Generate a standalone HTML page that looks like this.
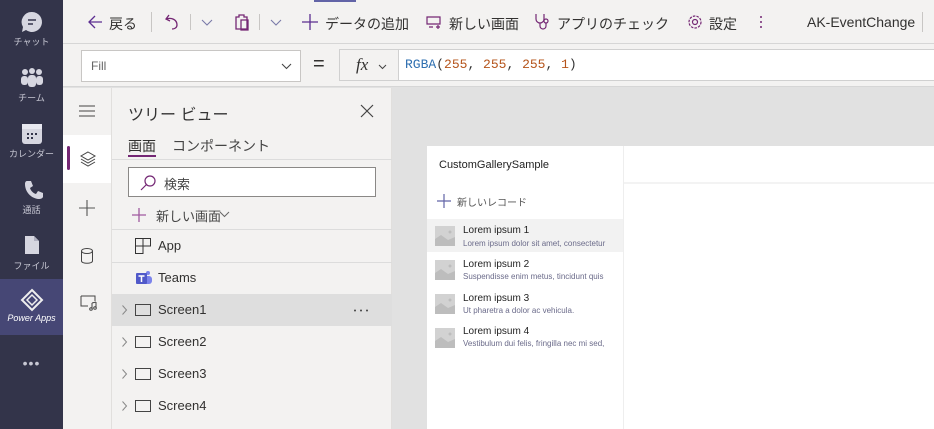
<!DOCTYPE html>
<html><head><meta charset="utf-8"><style>
*{box-sizing:border-box;margin:0;padding:0}
body{width:934px;height:429px;overflow:hidden;position:relative;font-family:"Liberation Sans","Noto Sans CJK JP",sans-serif;background:#e1e1e1;color:#323130}
.abs{position:absolute}
svg{position:absolute;overflow:visible}
.rail{left:0;top:0;width:63px;height:429px;background:#33344a}
.ri{position:absolute;left:0;width:63px;text-align:center;color:#c8c8d4;font-size:9px}
.tb{left:63px;top:0;width:871px;height:44px;background:#f3f2f1;border-bottom:1px solid #d6d6d6;font-size:14px}
.tb span{position:absolute;top:14px;white-space:nowrap}
.fb{left:63px;top:44px;width:871px;height:43px;background:#f3f2f1;border-bottom:1px solid #d6d6d6}
.side{left:63px;top:88px;width:49px;height:341px;background:#f3f2f1;border-right:1px solid #e1dfdd}
.tree{left:112px;top:88px;width:280px;height:341px;background:#f3f2f1;border-right:1px solid #e1dfdd}
.row{position:absolute;left:0;width:280px;height:32px;font-size:13px}
.row .t{position:absolute;left:46px;top:8px}
.scr{position:absolute;left:23px;top:10px;width:16px;height:12px;border:1px solid #444}
.gi{position:absolute;left:8px;width:20px;height:20px;background:#d2d2d2;overflow:hidden}
.it{position:absolute;left:36px;font-size:10px;color:#222}
.is{position:absolute;left:36px;font-size:8px;color:#6b6b8a;white-space:nowrap}
</style></head><body>
<div class="abs rail">
 <svg style="left:21px;top:11px" width="22" height="22"><path d="M11 1a10 10 0 1 1-6 18l-4 2 1-5A10 10 0 0 1 11 1z" fill="#d6d6e0"/><path d="M7 9h8M7 13h5" stroke="#33344a" stroke-width="1.6"/></svg>
 <div class="ri" style="top:35px">チャット</div>
 <svg style="left:20px;top:68px" width="24" height="20"><circle cx="5" cy="4" r="3" fill="#d6d6e0"/><circle cx="12" cy="3" r="3" fill="#d6d6e0"/><circle cx="19" cy="4" r="3" fill="#d6d6e0"/><rect x="1" y="8" width="7" height="9" rx="3" fill="#d6d6e0"/><rect x="8" y="7" width="8" height="12" rx="3" fill="#d6d6e0"/><rect x="16" y="8" width="7" height="9" rx="3" fill="#d6d6e0"/></svg>
 <div class="ri" style="top:91px">チーム</div>
 <svg style="left:22px;top:124px" width="20" height="20"><rect width="20" height="20" rx="3" fill="#d6d6e0"/><rect x="0" y="0" width="20" height="5" fill="#e8e8f0"/><g fill="#33344a"><rect x="5" y="9" width="2" height="2"/><rect x="9" y="9" width="2" height="2"/><rect x="13" y="9" width="2" height="2"/><rect x="5" y="13" width="2" height="2"/><rect x="9" y="13" width="2" height="2"/></g></svg>
 <div class="ri" style="top:147px">カレンダー</div>
 <svg style="left:24px;top:180px" width="18" height="20"><path d="M3 1l4 0 2 5-3 2c1 3 3 5 6 6l2-3 5 2 0 4c-1 2-3 2-5 2C7 18 1 12 1 4c0-2 1-3 2-3z" fill="#d6d6e0"/></svg>
 <div class="ri" style="top:203px">通話</div>
 <svg style="left:24px;top:235px" width="16" height="20"><path d="M1 1h9l5 5v13H1z" fill="#d6d6e0"/><path d="M10 1v5h5" fill="#b0b0c0"/></svg>
 <div class="ri" style="top:259px">ファイル</div>
 <div class="abs" style="left:0;top:279px;width:63px;height:56px;background:#464775"></div>
 <svg style="left:21px;top:289px" width="22" height="22"><path d="M11 1l10 10-10 10L1 11z" fill="none" stroke="#eee" stroke-width="2"/><path d="M6 11l5-5 5 5-5 5z" fill="none" stroke="#eee" stroke-width="1.5"/></svg>
 <div class="ri" style="top:313px;color:#fff;font-style:italic">Power Apps</div>
 <div class="ri" style="top:355px;font-size:14px;letter-spacing:1px">•••</div>
</div>
<div class="abs tb">
 <div class="abs" style="left:251px;top:0;width:42px;height:2px;background:#6264a7"></div>
 <svg style="left:24px;top:15px" width="16" height="14"><path d="M15 7H2M8 1L2 7l6 6" fill="none" stroke="#5c2e91" stroke-width="1.3"/></svg><span style="left:46px">戻る</span>
 <div class="abs" style="left:88px;top:12px;width:1px;height:20px;background:#c8c6c4"></div>
 <svg style="left:102px;top:14px" width="14" height="16"><path d="M4 1L1 5l4 2M1 5c6-2 11 1 11 6 0 3-3 4-5 4" fill="none" stroke="#742774" stroke-width="1.3"/></svg>
 <div class="abs" style="left:127px;top:14px;width:1px;height:16px;background:#c8c6c4"></div>
 <svg style="left:138px;top:19px" width="12" height="7"><path d="M1 1l5 5 5-5" fill="none" stroke="#7a7aa8" stroke-width="1.1"/></svg>
 <svg style="left:172px;top:14px" width="14" height="17"><path d="M1 3h3v-2h5v2h3v12H1z M6 6h7v10H6z" fill="none" stroke="#742774" stroke-width="1.3"/></svg>
 <div class="abs" style="left:196px;top:14px;width:1px;height:16px;background:#c8c6c4"></div>
 <svg style="left:207px;top:19px" width="12" height="7"><path d="M1 1l5 5 5-5" fill="none" stroke="#7a7aa8" stroke-width="1.1"/></svg>
 <svg style="left:239px;top:14px" width="16" height="16"><path d="M8 0v16M0 8h16" stroke="#5c2e91" stroke-width="1.3"/></svg><span style="left:262px">データの追加</span>
 <svg style="left:363px;top:16px" width="15" height="12"><path d="M1 1h13v7H1zM3 11h4M10 11h4M12 9v4" fill="none" stroke="#742774" stroke-width="1.2"/></svg><span style="left:386px">新しい画面</span>
 <svg style="left:471px;top:13px" width="16" height="18"><path d="M2 1v5a4 4 0 0 0 8 0V1M6 10v3a3 3 0 0 0 6 0v-3" fill="none" stroke="#742774" stroke-width="1.2"/><circle cx="12" cy="8" r="2" fill="none" stroke="#742774" stroke-width="1.2"/></svg><span style="left:494px">アプリのチェック</span>
 <svg style="left:624px;top:14px" width="16" height="16"><circle cx="8" cy="8" r="6" fill="none" stroke="#742774" stroke-width="1.2" stroke-dasharray="2.5 1.2"/><circle cx="8" cy="8" r="2.5" fill="none" stroke="#742774" stroke-width="1.2"/></svg><span style="left:646px">設定</span>
 <svg style="left:696px;top:15px" width="4" height="14"><circle cx="2" cy="2" r="1" fill="#742774"/><circle cx="2" cy="7" r="1" fill="#742774"/><circle cx="2" cy="12" r="1" fill="#742774"/></svg>
 <span style="left:744px">AK-EventChange</span>
 <div class="abs" style="left:859px;top:12px;width:1px;height:20px;background:#c8c6c4"></div>
</div>
<div class="abs fb">
 <div class="abs" style="left:18px;top:6px;width:220px;height:32px;background:#fff;border:1px solid #c8c6c4;font-size:12px;color:#666;padding:8px 9px">Fill<svg style="right:8px;top:12px" width="11" height="6"><path d="M1 1l4.5 4.5L10 1" fill="none" stroke="#444" stroke-width="1.1"/></svg></div>
 <div class="abs" style="left:250px;top:9px;font-size:20px">=</div>
 <div class="abs" style="left:276px;top:5px;width:60px;height:32px;border:1px solid #d0d0d0;font-family:'Liberation Serif',serif;font-style:italic;font-size:17px;padding:5px 16px">fx<svg style="left:38px;top:14px" width="9" height="5"><path d="M1 1l3.5 3.5L8 1" fill="none" stroke="#444" stroke-width="1"/></svg></div>
 <div class="abs" style="left:336px;top:5px;width:535px;height:32px;background:#fff;border-top:1px solid #d0d0d0;border-bottom:1px solid #d0d0d0;font-family:'Liberation Mono',monospace;font-size:13px;padding:7px 6px;color:#b5541b"><span style="color:#2e6fb0">RGBA</span><span style="color:#333">(</span>255<span style="color:#333">, </span>255<span style="color:#333">, </span>255<span style="color:#333">, </span>1<span style="color:#333">)</span></div>
</div>
<div class="abs side">
 <svg style="left:16px;top:17px" width="16" height="12"><path d="M0 1h16M0 6h16M0 11h16" stroke="#444" stroke-width="1.1"/></svg>
 <div class="abs" style="left:0;top:47px;width:48px;height:48px;background:#fff"></div>
 <div class="abs" style="left:4px;top:58px;width:3px;height:24px;background:#742774;border-radius:2px"></div>
 <svg style="left:17px;top:63px" width="16" height="16"><path d="M8 1l7 4-7 4-7-4z" fill="none" stroke="#444"/><path d="M1 8l7 4 7-4M1 11l7 4 7-4" fill="none" stroke="#444"/></svg>
 <svg style="left:16px;top:112px" width="16" height="16"><path d="M8 0v16M0 8h16" stroke="#555" stroke-width="1.1"/></svg>
 <svg style="left:18px;top:160px" width="12" height="16"><ellipse cx="6" cy="3" rx="5.5" ry="2.5" fill="none" stroke="#444"/><path d="M0.5 3v10c0 3 11 3 11 0V3" fill="none" stroke="#444"/></svg>
 <svg style="left:17px;top:207px" width="18" height="16"><path d="M1 1h14v5M1 1v10h7" fill="none" stroke="#444"/><path d="M12 8v6M16 7v6M12 8l4-1" fill="none" stroke="#444"/><circle cx="11" cy="14" r="1.3" fill="none" stroke="#444"/><circle cx="15" cy="13" r="1.3" fill="none" stroke="#444"/></svg>
</div>
<div class="abs tree">
 <div class="abs" style="left:16px;top:13px;font-size:16px;color:#333">ツリー ビュー</div>
 <svg style="left:249px;top:17px" width="12" height="12"><path d="M0 0l12 12M12 0L0 12" stroke="#444" stroke-width="1.2"/></svg>
 <div class="abs" style="left:16px;top:48px;font-size:14px">画面</div>
 <div class="abs" style="left:16px;top:67px;width:28px;height:2px;background:#742774"></div>
 <div class="abs" style="left:60px;top:48px;font-size:14px;color:#444">コンポーネント</div>
 <div class="abs" style="left:0;top:71px;width:280px;height:1px;background:#dcdcdc"></div>
 <div class="abs" style="left:16px;top:79px;width:248px;height:30px;background:#fff;border:1px solid #8a8886;font-size:13px;padding:6px 35px;color:#444">検索<svg style="left:11px;top:7px" width="16" height="16"><circle cx="10" cy="6" r="5" fill="none" stroke="#742774" stroke-width="1.2"/><path d="M6.5 9.5L1 15" stroke="#742774" stroke-width="1.2"/></svg></div>
 <svg style="left:20px;top:120px" width="14" height="14"><path d="M7 0v14M0 7h14" stroke="#a05aa0" stroke-width="1.3"/></svg>
 <div class="abs" style="left:44px;top:118px;font-size:13px;color:#444">新しい画面</div>
 <svg style="left:107px;top:123px" width="11" height="6"><path d="M1 1l4.5 4.5L10 1" fill="none" stroke="#666" stroke-width="1"/></svg>
 <div class="abs" style="left:0;top:141px;width:280px;height:1px;background:#dcdcdc"></div>
 <div class="row" style="top:142px"><svg style="left:23px;top:8px" width="16" height="16"><path d="M0.5 0.5h15v7.5h-7.5v7.5h-7.5zM8 0.5v7.5M0.5 8h7.5" fill="none" stroke="#333"/></svg><div class="t">App</div></div>
 <div class="abs" style="left:0;top:174px;width:280px;height:1px;background:#dcdcdc"></div>
 <div class="row" style="top:174px"><svg style="left:23px;top:8px" width="18" height="16"><circle cx="13" cy="3" r="2" fill="#7b83eb"/><rect x="9" y="6" width="8" height="8" rx="3" fill="#7b83eb"/><rect x="1" y="3" width="11" height="11" rx="1" fill="#5059c9"/><path d="M3.5 6h6M6.5 6v6" stroke="#fff" stroke-width="1.5"/></svg><div class="t">Teams</div></div>
 <div class="row" style="top:206px;background:#dedede"><svg style="left:10px;top:11px" width="5" height="10"><path d="M0.5 0.5l4 4.5-4 4.5" fill="none" stroke="#888"/></svg><div class="scr"></div><div class="t">Screen1</div><svg style="left:241px;top:15px" width="16" height="3"><circle cx="2" cy="1.5" r="1" fill="#444"/><circle cx="8" cy="1.5" r="1" fill="#444"/><circle cx="14" cy="1.5" r="1" fill="#444"/></svg></div>
 <div class="row" style="top:238px"><svg style="left:10px;top:11px" width="5" height="10"><path d="M0.5 0.5l4 4.5-4 4.5" fill="none" stroke="#888"/></svg><div class="scr"></div><div class="t">Screen2</div></div>
 <div class="row" style="top:270px"><svg style="left:10px;top:11px" width="5" height="10"><path d="M0.5 0.5l4 4.5-4 4.5" fill="none" stroke="#888"/></svg><div class="scr"></div><div class="t">Screen3</div></div>
 <div class="row" style="top:302px"><svg style="left:10px;top:11px" width="5" height="10"><path d="M0.5 0.5l4 4.5-4 4.5" fill="none" stroke="#888"/></svg><div class="scr"></div><div class="t">Screen4</div></div>
</div>
<div class="abs" style="left:427px;top:146px;width:507px;height:283px;background:#fff">
 <div class="abs" style="left:196px;top:0;width:1px;height:283px;background:#eee"></div>
 <div class="abs" style="left:197px;top:36px;width:310px;height:2px;background:#f3f3f3"></div>
 <div class="abs" style="left:12px;top:13px;font-size:11px;color:#222">CustomGallerySample</div>
 <svg style="left:10px;top:48px" width="14" height="14"><path d="M7 0v14M0 7h14" stroke="#6264a7" stroke-width="1.2"/></svg>
 <div class="abs" style="left:30px;top:48px;font-size:10px;color:#555">新しいレコード</div>
 <div class="abs" style="left:0;top:73px;width:196px;height:33px;background:#f2f2f2"></div>
 <div class="gi" style="top:80px"><svg width="20" height="20"><path d="M0 20V13l6-4 7 5 7-3v9z" fill="#bdbdbd"/><circle cx="15" cy="6" r="1.5" fill="#bdbdbd"/></svg></div><div class="it" style="top:79px">Lorem ipsum 1</div><div class="is" style="top:93px">Lorem ipsum dolor sit amet, consectetur</div>
 <div class="gi" style="top:114px"><svg width="20" height="20"><path d="M0 20V13l6-4 7 5 7-3v9z" fill="#bdbdbd"/><circle cx="15" cy="6" r="1.5" fill="#bdbdbd"/></svg></div><div class="it" style="top:113px">Lorem ipsum 2</div><div class="is" style="top:126px">Suspendisse enim metus, tincidunt quis</div>
 <div class="gi" style="top:148px"><svg width="20" height="20"><path d="M0 20V13l6-4 7 5 7-3v9z" fill="#bdbdbd"/><circle cx="15" cy="6" r="1.5" fill="#bdbdbd"/></svg></div><div class="it" style="top:147px">Lorem ipsum 3</div><div class="is" style="top:160px">Ut pharetra a dolor ac vehicula.</div>
 <div class="gi" style="top:182px"><svg width="20" height="20"><path d="M0 20V13l6-4 7 5 7-3v9z" fill="#bdbdbd"/><circle cx="15" cy="6" r="1.5" fill="#bdbdbd"/></svg></div><div class="it" style="top:180px">Lorem ipsum 4</div><div class="is" style="top:193px">Vestibulum dui felis, fringilla nec mi sed,</div>
</div>
</body></html>
